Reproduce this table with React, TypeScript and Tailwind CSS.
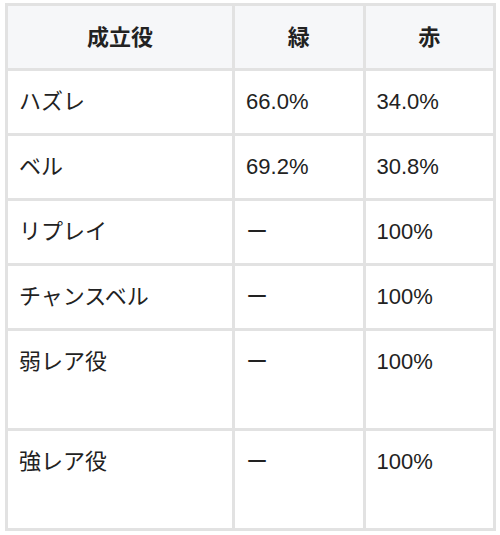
import React from 'react';

interface Row { name: string; green: string; red: string; tall?: boolean }

const rows: Row[] = [
  { name: 'ハズレ', green: '66.0%', red: '34.0%' },
  { name: 'ベル', green: '69.2%', red: '30.8%' },
  { name: 'リプレイ', green: 'ー', red: '100%' },
  { name: 'チャンスベル', green: 'ー', red: '100%' },
  { name: '弱レア役', green: 'ー', red: '100%', tall: true },
  { name: '強レア役', green: 'ー', red: '100%', tall: true },
];

export default function App() {
  return (
    <div className="w-[500px] h-[535px] bg-white pl-[5px] pt-[3px] font-['Liberation_Sans','Noto_Sans_CJK_JP',sans-serif] text-[#222]">
      <table className="border-collapse w-[491px] text-[22px] leading-[33px]">
        <colgroup>
          <col className="w-[229px]" />
          <col className="w-[131px]" />
          <col className="w-[131px]" />
        </colgroup>
        <thead>
          <tr className="bg-[#f6f7f9]">
            <th className="border-[3px] border-[#e2e2e2] h-[65px] font-bold text-center align-middle">成立役</th>
            <th className="border-[3px] border-[#e2e2e2] h-[65px] font-bold text-center align-middle">緑</th>
            <th className="border-[3px] border-[#e2e2e2] h-[65px] font-bold text-center align-middle">赤</th>
          </tr>
        </thead>
        <tbody>
          {rows.map(r => (
            <tr key={r.name}>
              <td className={`border-[3px] border-[#e2e2e2] align-top pl-[11px] pt-[14px] ${r.tall ? 'h-[100px]' : 'h-[65px]'}`}>{r.name}</td>
              <td className={`border-[3px] border-[#e2e2e2] align-top pl-[11px] pt-[14px] ${r.tall ? 'h-[100px]' : 'h-[65px]'}`}>{r.green}</td>
              <td className={`border-[3px] border-[#e2e2e2] align-top pl-[11px] pt-[14px] ${r.tall ? 'h-[100px]' : 'h-[65px]'}`}>{r.red}</td>
            </tr>
          ))}
        </tbody>
      </table>
    </div>
  );
}
